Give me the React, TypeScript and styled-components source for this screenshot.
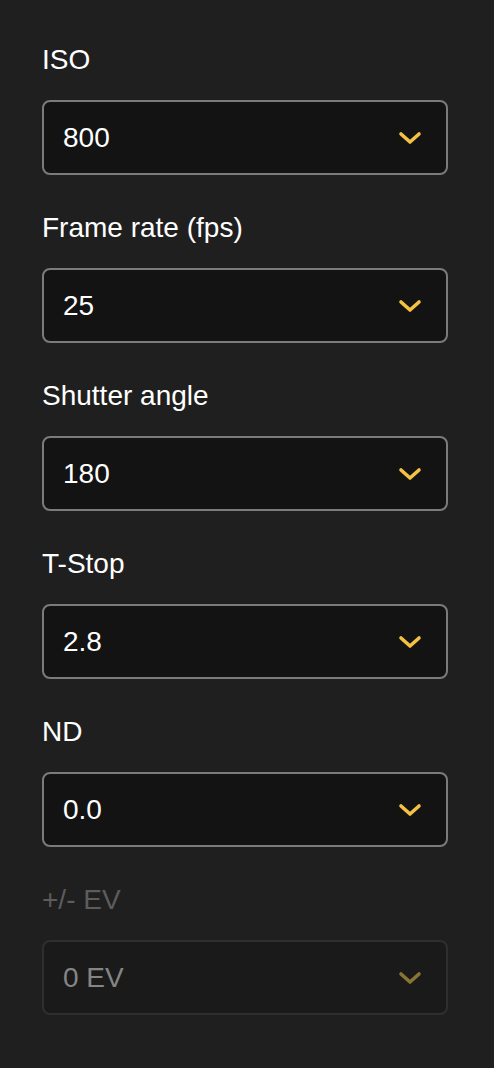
import React from "react";
import styled, { createGlobalStyle } from "styled-components";

const GlobalStyle = createGlobalStyle`
  html, body {
    margin: 0;
    padding: 0;
    background: #1f1f1f;
  }
  body {
    font-family: "Liberation Sans", Arial, Helvetica, sans-serif;
  }
`;

type Setting = {
  label: string;
  value: string;
  disabled?: boolean;
};

const settings: Setting[] = [
  { label: "ISO", value: "800" },
  { label: "Frame rate (fps)", value: "25" },
  { label: "Shutter angle", value: "180" },
  { label: "T-Stop", value: "2.8" },
  { label: "ND", value: "0.0" },
  { label: "+/- EV", value: "0 EV", disabled: true },
];

function Chevron({ disabled }: { disabled?: boolean }) {
  return (
    <ChevronIcon
      viewBox="0 0 24 14"
      width="24"
      height="14"
      fill="none"
      stroke={disabled ? "#8a7433" : "#f4c143"}
      strokeWidth="3.6"
      strokeLinecap="round"
      strokeLinejoin="round"
    >
      <polyline points="3,3 12,11 21,3" />
    </ChevronIcon>
  );
}

function App() {
  return (
    <>
      <GlobalStyle />
      <Panel>
        {settings.map((s) => (
          <Field key={s.label}>
            <Label $disabled={s.disabled}>{s.label}</Label>
            <Select $disabled={s.disabled}>
              <Value $disabled={s.disabled}>{s.value}</Value>
              <Chevron disabled={s.disabled} />
            </Select>
          </Field>
        ))}
      </Panel>
    </>
  );
}

export default App;

const Panel = styled.div`
  display: flex;
  flex-direction: column;
  gap: 37px;
  width: 494px;
  padding: 44px 46px 53px 42px;
  min-height: 1068px;
  box-sizing: border-box;
`;

const Field = styled.div`
  display: flex;
  flex-direction: column;
  gap: 24px;
`;

const Label = styled.div<{ $disabled?: boolean }>`
  font-size: 28px;
  line-height: 32px;
  color: ${(p) => (p.$disabled ? "#5c5c5c" : "#ffffff")};
`;

const Select = styled.div<{ $disabled?: boolean }>`
  display: flex;
  align-items: center;
  justify-content: space-between;
  height: 75px;
  box-sizing: border-box;
  padding: 0 24px 0 19px;
  border: 2px solid ${(p) => (p.$disabled ? "#2f2f2f" : "#7b7b7b")};
  border-radius: 8px;
  background: ${(p) => (p.$disabled ? "#1a1a1a" : "#131313")};
`;

const Value = styled.span<{ $disabled?: boolean }>`
  font-size: 28px;
  color: ${(p) => (p.$disabled ? "#858585" : "#ffffff")};
`;

const ChevronIcon = styled.svg`
  display: block;
  flex-shrink: 0;
`;
